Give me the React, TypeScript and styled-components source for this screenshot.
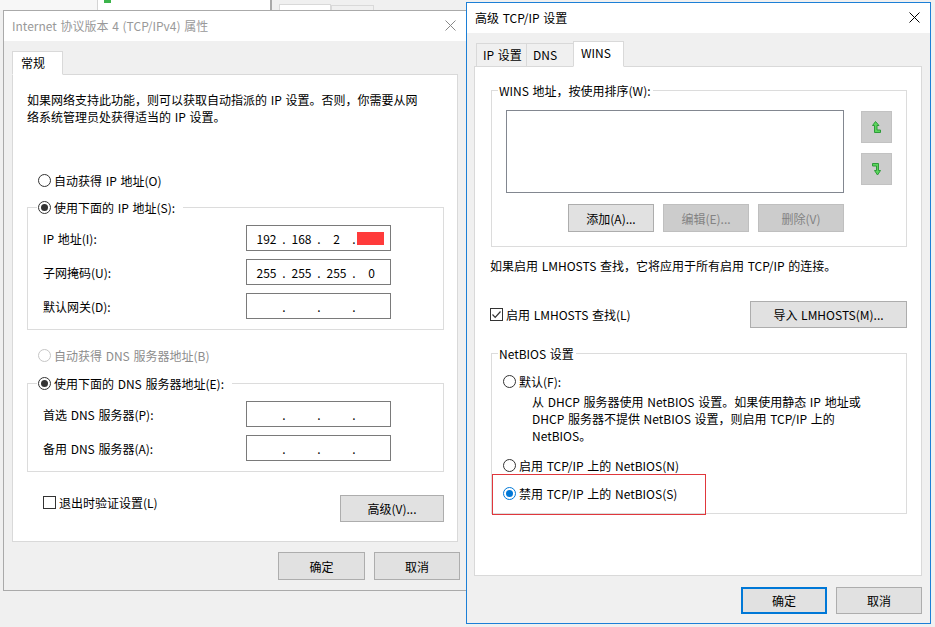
import React from 'react';
import styled, { createGlobalStyle } from 'styled-components';

const GlobalStyle = createGlobalStyle`
  html, body { margin: 0; padding: 0; background: #f0f0f0; }
  body {
    font-family: "Noto Sans CJK SC", "Noto Sans", sans-serif;
    font-size: 12px;
    word-spacing: 1px;
    color: #000;
  }
  * { box-sizing: border-box; }
`;

const Desktop = styled.div`
  position: relative;
  width: 935px;
  height: 627px;
  overflow: hidden;
  background: #f0f0f0;
`;

/* ---------- window behind (only a strip visible) ---------- */
const BackWindow = styled.div`
  position: absolute;
  left: 0;
  top: 0;
  width: 470px;
  height: 10px;
  display: flex;
  background: #f0f0f0;
`;
const BackSide = styled.div`
  width: 97px;
  background: #f7f7f7;
`;
const BackField = styled.div`
  width: 175px;
  background: #fff;
  border-left: 1px solid #d4d4d4;
  border-right: 2px solid #a9a9a9;
  padding-left: 6px;
`;
const BackIcon = styled.div`
  width: 7px;
  height: 3px;
  background: #3cb44b;
`;
const BackTabs = styled.div`
  display: flex;
  align-items: flex-end;
  padding-left: 7px;
`;
const BackTab = styled.div<{ $w: number; $active?: boolean }>`
  width: ${p => p.$w}px;
  height: ${p => (p.$active ? 6 : 5)}px;
  background: ${p => (p.$active ? '#fff' : '#f0f0f0')};
  border: 1px solid #d9d9d9;
  border-bottom: none;
`;

/* ---------- windows ---------- */
const Window = styled.div<{ $active?: boolean }>`
  position: absolute;
  display: flex;
  flex-direction: column;
  background: #f0f0f0;
  border: 1px solid ${p => (p.$active ? '#1c7fd6' : '#aaaaaa')};
`;
const LeftWindow = styled(Window)`
  left: 3px;
  top: 10px;
  width: 464px;
  height: 581px;
`;
const RightWindow = styled(Window)`
  left: 466px;
  top: 2px;
  width: 465px;
  height: 622px;
`;

const TitleBar = styled.div<{ $active?: boolean }>`
  flex: none;
  height: 30px;
  background: #fff;
  display: flex;
  align-items: center;
  justify-content: space-between;
  padding: 0 10px 2px 8px;
  color: ${p => (p.$active ? '#000' : '#999')};
  line-height: 17px;
`;

const Body = styled.div<{ $pad: string }>`
  flex: 1;
  display: flex;
  flex-direction: column;
  padding: ${p => p.$pad};
  min-height: 0;
`;

const TabStrip = styled.div<{ $pl: number }>`
  flex: none;
  display: flex;
  align-items: flex-end;
  padding-left: ${p => p.$pl}px;
  margin-bottom: -1px;
  position: relative;
  z-index: 1;
`;
const Tab = styled.div<{ $active?: boolean; $w: number; $h: number; $pl: number }>`
  width: ${p => p.$w}px;
  height: ${p => p.$h}px;
  padding: 2px 0 0 ${p => p.$pl}px;
  line-height: 17px;
  background: ${p => (p.$active ? '#fff' : '#f0f0f0')};
  border: 1px solid #d9d9d9;
  border-bottom-color: ${p => (p.$active ? '#fff' : '#d9d9d9')};
  & + & { margin-left: -1px; }
`;

const Panel = styled.div<{ $pad: string }>`
  flex: 1;
  display: flex;
  flex-direction: column;
  background: #fff;
  border: 1px solid #d9d9d9;
  padding: ${p => p.$pad};
`;

const Para = styled.p<{ $mt?: number; $ml?: number }>`
  margin: ${p => p.$mt ?? 0}px 0 0 ${p => p.$ml ?? 0}px;
  line-height: 17px;
`;

const RadioRow = styled.div<{ $mt?: number; $ml?: number; $disabled?: boolean }>`
  display: flex;
  align-items: center;
  gap: 3px;
  height: 17px;
  line-height: 17px;
  margin: ${p => p.$mt ?? 0}px 0 0 ${p => p.$ml ?? 0}px;
  color: ${p => (p.$disabled ? '#8d8d8d' : '#000')};
  white-space: nowrap;
`;

const Radio = styled.span<{ $checked?: boolean; $tone?: 'normal' | 'disabled' | 'focus' }>`
  flex: none;
  width: 13px;
  height: 13px;
  border-radius: 50%;
  background: #fff;
  border: 1px solid
    ${p => (p.$tone === 'disabled' ? '#c6c6c6' : p.$tone === 'focus' ? '#0078d7' : '#333')};
  display: grid;
  place-items: center;
  &::after {
    content: '';
    display: ${p => (p.$checked ? 'block' : 'none')};
    width: 7px;
    height: 7px;
    border-radius: 50%;
    background: ${p => (p.$tone === 'focus' ? '#0078d7' : '#333')};
  }
`;

const CheckRow = styled.label<{ $ml?: number; $mt?: number }>`
  display: flex;
  align-items: center;
  gap: 3px;
  height: 17px;
  margin: ${p => p.$mt ?? 0}px 0 0 ${p => p.$ml ?? 0}px;
  line-height: 17px;
  white-space: nowrap;
`;
const CheckBox = styled.span`
  flex: none;
  width: 13px;
  height: 13px;
  border: 1px solid #333;
  background: #fff;
  display: grid;
  place-items: center;
`;

const Group = styled.fieldset<{ $mt?: number }>`
  margin: ${p => p.$mt ?? 0}px 0 0 0;
  padding: 0;
  min-width: 0;
  border: 1px solid #dcdcdc;
`;
const Legend = styled.legend<{ $ml: number; $pr: number }>`
  margin-left: ${p => p.$ml}px;
  padding: 0 ${p => p.$pr}px 0 1px;
  line-height: 17px;
`;

const FieldGrid = styled.div`
  display: grid;
  grid-template-columns: 203px 145px;
  row-gap: 8px;
  align-items: center;
  padding: 9px 0 10px 15px;
`;
const FieldLabel = styled.span`
  line-height: 17px;
  white-space: nowrap;
`;
const IpField = styled.div`
  height: 26px;
  border: 1px solid #7a7a7a;
  background: #fff;
  display: flex;
  align-items: center;
  padding-left: 5px;
`;
const Seg = styled.span`
  width: 29px;
  display: flex;
  justify-content: center;
  line-height: 17px;
`;
const SegDot = styled.span`
  width: 6px;
  text-align: center;
  line-height: 17px;
`;
const Redact = styled.span`
  width: 27px;
  height: 13px;
  background: #ff3b3b;
  margin-left: -3px;
`;

const Button = styled.button<{ $w: number; $h?: number; $default?: boolean }>`
  flex: none;
  width: ${p => p.$w}px;
  height: ${p => p.$h ?? 27}px;
  padding: 0;
  font: inherit;
  word-spacing: inherit;
  line-height: 17px;
  color: #000;
  background: #e1e1e1;
  border: ${p => (p.$default ? '2px solid #0078d7' : '1px solid #adadad')};
  &:disabled {
    background: #cccccc;
    border-color: #bfbfbf;
    color: #838383;
  }
`;

const PanelFooter = styled.div<{ $mt: number; $align: 'center' | 'flex-start' }>`
  display: flex;
  align-items: ${p => p.$align};
  justify-content: space-between;
  margin-top: ${p => p.$mt}px;
`;

const DialogButtons = styled.div<{ $mt: number; $mr?: number }>`
  flex: none;
  display: flex;
  justify-content: flex-end;
  gap: 9px;
  margin-top: ${p => p.$mt}px;
  margin-right: ${p => p.$mr ?? 0}px;
`;

/* right dialog specifics */
const WinsBody = styled.div`
  padding: 11px 14px 14px 14px;
  display: flex;
  flex-direction: column;
`;
const ListRow = styled.div`
  display: flex;
  gap: 17px;
  align-items: flex-start;
`;
const ListBox = styled.div`
  width: 339px;
  height: 83px;
  background: #fff;
  border: 1px solid #828790;
`;
const ArrowCol = styled.div`
  display: flex;
  flex-direction: column;
  gap: 10px;
  padding-top: 1px;
`;
const ArrowButton = styled.div`
  width: 31px;
  height: 32px;
  background: #cccccc;
  border: 1px solid #c2c2c2;
  display: grid;
  place-items: center;
`;
const ListButtons = styled.div`
  display: flex;
  gap: 9px;
  padding-left: 62px;
  margin-top: 11px;
`;

const NetBody = styled.div`
  padding: 11px 0 0 11px;
  display: flex;
  flex-direction: column;
  align-items: flex-start;
`;
const Highlight = styled.div`
  width: 214px;
  margin: 0 0 -2px -11px;
  padding: 10px 0 12px 10px;
  border: 1px solid #e0373c;
  position: relative;
`;

const CloseIcon = ({ color }: { color: string }) => (
  <svg width="11" height="11" viewBox="0 0 11 11">
    <path d="M0.5 0.5 L10.5 10.5 M10.5 0.5 L0.5 10.5" stroke={color} strokeWidth="1" fill="none" />
  </svg>
);

const CheckMark = () => (
  <svg width="11" height="11" viewBox="0 0 11 11">
    <path d="M1.5 5.5 L4.2 8.3 L9.5 2.5" stroke="#333" strokeWidth="1.2" fill="none" />
  </svg>
);

const UpArrow = () => (
  <svg width="9" height="13" viewBox="0 0 9 13">
    <path
      d="M3.5 0.5 L7 4.5 L5 4.5 L5 9 L8.5 9 L8.5 11.5 L2.5 11.5 L2.5 4.5 L0.5 4.5 Z"
      fill="#5cd65c"
      stroke="#2f9a3b"
      strokeWidth="1"
      strokeLinejoin="round"
    />
  </svg>
);

const DownArrow = () => (
  <svg width="9" height="13" viewBox="0 0 9 13">
    <path
      d="M0.5 0.5 L6.5 0.5 L6.5 7.5 L8.5 7.5 L5.5 12 L2.5 7.5 L4.5 7.5 L4.5 3 L0.5 3 Z"
      fill="#5cd65c"
      stroke="#2f9a3b"
      strokeWidth="1"
      strokeLinejoin="round"
    />
  </svg>
);

const IpInput = ({ parts, redact }: { parts: string[]; redact?: boolean }) => (
  <IpField>
    {parts.map((p, i) => (
      <React.Fragment key={i}>
        {i > 0 && <SegDot>.</SegDot>}
        <Seg>{i === 3 && redact ? <Redact /> : p}</Seg>
      </React.Fragment>
    ))}
  </IpField>
);

export default function App() {
  return (
    <>
      <GlobalStyle />
      <Desktop>
        <BackWindow>
          <BackSide />
          <BackField>
            <BackIcon />
          </BackField>
          <BackTabs>
            <BackTab $w={52} $active />
            <BackTab $w={43} />
          </BackTabs>
        </BackWindow>

        <LeftWindow>
          <TitleBar>
            <span>Internet 协议版本 4 (TCP/IPv4) 属性</span>
            <CloseIcon color="#888" />
          </TitleBar>
          <Body $pad="10px 8px 10px 8px">
            <TabStrip $pl={0}>
              <Tab $active $w={51} $h={24} $pl={8}>常规</Tab>
            </TabStrip>
            <Panel $pad="16px 13px 0 14px">
              <Para>
                如果网络支持此功能，则可以获取自动指派的 IP 设置。否则，你需要从网
                <br />
                络系统管理员处获得适当的 IP 设置。
              </Para>
              <RadioRow $mt={47} $ml={11}>
                <Radio />
                自动获得 IP 地址(O)
              </RadioRow>
              <Group $mt={10}>
                <Legend $ml={9} $pr={8}>
                  <RadioRow>
                    <Radio $checked />
                    使用下面的 IP 地址(S):
                  </RadioRow>
                </Legend>
                <FieldGrid>
                  <FieldLabel>IP 地址(I):</FieldLabel>
                  <IpInput parts={['192', '168', '2', '']} redact />
                  <FieldLabel>子网掩码(U):</FieldLabel>
                  <IpInput parts={['255', '255', '255', '0']} />
                  <FieldLabel>默认网关(D):</FieldLabel>
                  <IpInput parts={['', '', '', '']} />
                </FieldGrid>
              </Group>
              <RadioRow $mt={17} $ml={11} $disabled>
                <Radio $tone="disabled" />
                自动获得 DNS 服务器地址(B)
              </RadioRow>
              <Group $mt={11}>
                <Legend $ml={9} $pr={8}>
                  <RadioRow>
                    <Radio $checked />
                    使用下面的 DNS 服务器地址(E):
                  </RadioRow>
                </Legend>
                <FieldGrid>
                  <FieldLabel>首选 DNS 服务器(P):</FieldLabel>
                  <IpInput parts={['', '', '', '']} />
                  <FieldLabel>备用 DNS 服务器(A):</FieldLabel>
                  <IpInput parts={['', '', '', '']} />
                </FieldGrid>
              </Group>
              <PanelFooter $mt={23} $align="flex-start">
                <CheckRow $ml={16} $mt={-1}>
                  <CheckBox />
                  退出时验证设置(L)
                </CheckRow>
                <Button $w={104}>高级(V)...</Button>
              </PanelFooter>
            </Panel>
            <DialogButtons $mt={10} $mr={-2}>
              <Button $w={87} $h={28}>确定</Button>
              <Button $w={86} $h={28}>取消</Button>
            </DialogButtons>
          </Body>
        </LeftWindow>

        <RightWindow $active>
          <TitleBar $active>
            <span>高级 TCP/IP 设置</span>
            <CloseIcon color="#000" />
          </TitleBar>
          <Body $pad="8px 8px 9px 7px">
            <TabStrip $pl={2}>
              <Tab $w={51} $h={24} $pl={6}>IP 设置</Tab>
              <Tab $w={48} $h={24} $pl={6}>DNS</Tab>
              <Tab $active $w={51} $h={26} $pl={7}>WINS</Tab>
            </TabStrip>
            <Panel $pad="15px 14px 0 16px">
              <Group>
                <Legend $ml={6} $pr={2}>WINS 地址，按使用排序(W):</Legend>
                <WinsBody>
                  <ListRow>
                    <ListBox />
                    <ArrowCol>
                      <ArrowButton>
                        <UpArrow />
                      </ArrowButton>
                      <ArrowButton>
                        <DownArrow />
                      </ArrowButton>
                    </ArrowCol>
                  </ListRow>
                  <ListButtons>
                    <Button $w={86} $h={28}>添加(A)...</Button>
                    <Button $w={86} $h={28} disabled>编辑(E)...</Button>
                    <Button $w={86} $h={28} disabled>删除(V)</Button>
                  </ListButtons>
                </WinsBody>
              </Group>
              <Para $mt={10} $ml={-1}>
                如果启用 LMHOSTS 查找，它将应用于所有启用 TCP/IP 的连接。
              </Para>
              <PanelFooter $mt={27} $align="center">
                <CheckRow $ml={-1}>
                  <CheckBox>
                    <CheckMark />
                  </CheckBox>
                  启用 LMHOSTS 查找(L)
                </CheckRow>
                <Button $w={157}>导入 LMHOSTS(M)...</Button>
              </PanelFooter>
              <Group $mt={17}>
                <Legend $ml={6} $pr={2}>NetBIOS 设置</Legend>
                <NetBody>
                  <RadioRow>
                    <Radio />
                    默认(F):
                  </RadioRow>
                  <Para $mt={3} $ml={29}>
                    从 DHCP 服务器使用 NetBIOS 设置。如果使用静态 IP 地址或
                    <br />
                    DHCP 服务器不提供 NetBIOS 设置，则启用 TCP/IP 上的
                    <br />
                    NetBIOS。
                  </Para>
                  <RadioRow $mt={13}>
                    <Radio />
                    启用 TCP/IP 上的 NetBIOS(N)
                  </RadioRow>
                  <Highlight>
                    <RadioRow>
                      <Radio $checked $tone="focus" />
                      禁用 TCP/IP 上的 NetBIOS(S)
                    </RadioRow>
                  </Highlight>
                </NetBody>
              </Group>
            </Panel>
            <DialogButtons $mt={11}>
              <Button $w={86} $default>确定</Button>
              <Button $w={86}>取消</Button>
            </DialogButtons>
          </Body>
        </RightWindow>
      </Desktop>
    </>
  );
}
